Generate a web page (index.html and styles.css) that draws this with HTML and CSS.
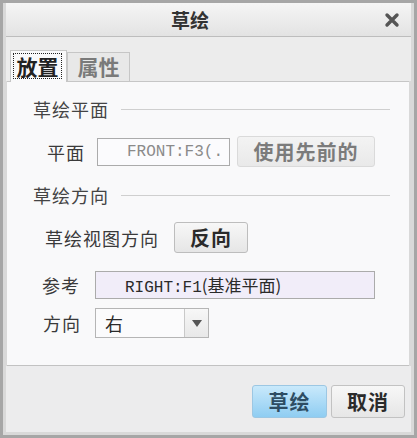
FILE: index.html
```html
<!DOCTYPE html>
<html lang="zh">
<head>
<meta charset="utf-8">
<title>草绘</title>
<link rel="stylesheet" href="styles.css">
</head>
<body>
<div class="win">
  <div class="titlebar">
    <span class="title">草绘</span>
    <span class="close">
      <svg width="16" height="16" viewBox="0 0 16 16"><path d="M3 3 L13 13 M13 3 L3 13" stroke="#555" stroke-width="3.4" stroke-linecap="round" fill="none"/></svg>
    </span>
  </div>
  <div class="tabs">
    <div class="tab active"><span class="focus">放置</span></div>
    <div class="tab">属性</div>
  </div>
  <div class="panel">
    <div class="sec s1"><span class="sec-t">草绘平面</span><i class="rule"></i></div>
    <div class="row r1">
      <span class="lbl l1">平面</span>
      <div class="field f-plane">FRONT:F3(.</div>
      <button class="btn btn-dis">使用先前的</button>
    </div>
    <div class="sec s2"><span class="sec-t">草绘方向</span><i class="rule"></i></div>
    <div class="row r2">
      <span class="lbl l2">草绘视图方向</span>
      <button class="btn btn-flip">反向</button>
    </div>
    <div class="row r3">
      <span class="lbl l3">参考</span>
      <div class="field f-ref">RIGHT:F1<span class="cjk">(基准平面)</span></div>
    </div>
    <div class="row r4">
      <span class="lbl l4">方向</span>
      <div class="select"><span class="val">右</span><span class="arrow"><svg width="10" height="7" viewBox="0 0 10 7"><path d="M0 0 H10 L5 7 Z" fill="#555"/></svg></span></div>
    </div>
  </div>
  <div class="footer">
    <button class="btn btn-foot primary">草绘</button>
    <button class="btn btn-foot">取消</button>
  </div>
</div>
</body>
</html>
```

FILE: styles.css
```css
html, body {
  margin: 0;
  padding: 0;
  background: #d4d4d4;
}
body {
  font-family: "Noto Sans CJK SC", "Noto Sans", sans-serif;
  color: #3a3a3a;
}
.win {
  width: 417px;
  height: 438px;
  box-sizing: border-box;
  border: 3px solid #a6a6a6;
  border-top-width: 3px;
  padding: 0 3px 3px 3px;
  background: #d9d9d9;
  display: flex;
  flex-direction: column;
}
.titlebar {
  height: 33px;
  flex: none;
  display: flex;
  align-items: center;
  background: linear-gradient(#f5f5f5, #e3e3e3);
  border-bottom: 1px solid #bdbdbd;
}
.title {
  flex: 1;
  text-align: center;
  font-size: 19px;
  font-weight: bold;
  color: #333;
  line-height: 33px;
}
.close {
  width: 35px;
  flex: none;
  display: flex;
  justify-content: center;
  align-items: center;
  padding-right: 2px;
}
.tabs {
  flex: none;
  background: #ececec;
  display: flex;
  align-items: flex-end;
  height: 44px;
  padding-left: 4px;
}
.tab {
  box-sizing: border-box;
  height: 29px;
  width: 63px;
  border: 1px solid #c6c6c6;
  border-bottom: none;
  background: #e8e8e8;
  color: #7a7a7a;
  font-size: 21px;
  font-weight: bold;
  line-height: 27px;
  text-align: center;
}
.tab.active {
  height: 32px;
  width: 57px;
  background: #f9f9fa;
  color: #222;
  position: relative;
  top: 1px;
  padding: 2px 2px 0 2px;
  text-align: left;
}
.focus {
  display: block;
  height: 26px;
  line-height: 24px;
  width: 49px;
  box-sizing: border-box;
  border: 1px dotted #222;
  text-align: center;
}
.panel {
  flex: none;
  height: 285px;
  box-sizing: border-box;
  margin: 0 2px 0 1px;
  background: #f9f9fa;
  border-top: 1px solid #c6c6c6;
  border-bottom: 1px solid #c2c2c2;
  padding: 15px 19px 0 26px;
  display: flex;
  flex-direction: column;
}
.sec {
  height: 24px;
  display: flex;
  align-items: center;
  gap: 12px;
}
.sec-t {
  font-size: 18px;
  color: #444;
  line-height: 24px;
  letter-spacing: 1px;
}
.rule {
  flex: 1;
  height: 1px;
  background: #cfcfcf;
}
.s2 { margin-top: 16px; }
.row {
  display: flex;
  align-items: center;
}
.r1 { margin-top: 15px; height: 31px; }
.r2 { margin-top: 15px; height: 31px; }
.r3 { margin-top: 18px; height: 28px; }
.r4 { margin-top: 9px; height: 30px; }
.lbl {
  font-size: 18px;
  color: #3a3a3a;
  letter-spacing: 1px;
}
.l1 { margin-left: 14px; width: 50px; }
.l2 { margin-left: 12px; width: 129px; }
.l3 { margin-left: 9px; width: 53px; }
.l4 { margin-left: 10px; width: 52px; }
.field {
  box-sizing: border-box;
  height: 28px;
  border: 1px solid #ababab;
  background: #fbfbfd;
  font-family: "Liberation Mono", "Noto Sans CJK SC", monospace;
  font-size: 16px;
  line-height: 26px;
  padding-left: 29px;
  white-space: nowrap;
  overflow: hidden;
}
.f-plane {
  width: 133px;
  color: #8a8a8a;
}
.f-ref {
  width: 280px;
  background: #f1edf9;
  color: #2a2a2a;
}
.f-ref .cjk {
  font-family: "Noto Sans CJK SC", sans-serif;
  font-size: 17px;
}
.btn {
  font-family: "Noto Sans CJK SC", "Noto Sans", sans-serif;
  box-sizing: border-box;
  border: 1px solid #c6c6c6;
  border-radius: 3px;
  background: linear-gradient(#f7f7f7, #e6e6e6);
  font-weight: bold;
  font-size: 20px;
  padding: 0;
  color: #2a2a2a;
}
.btn-dis {
  margin-left: 7px;
  width: 138px;
  height: 31px;
  color: #7b7b7b;
  border-color: #dadada;
  background: linear-gradient(#f3f3f3, #e9e9e9);
  letter-spacing: 1px;
}
.btn-flip {
  width: 74px;
  height: 31px;
  border-color: #bdbdbd;
  letter-spacing: 1px;
}
.select {
  box-sizing: border-box;
  width: 114px;
  height: 30px;
  border: 1px solid #b5b5b5;
  background: #fbfbfc;
  display: flex;
}
.val {
  flex: 1;
  font-size: 18px;
  line-height: 28px;
  padding-left: 9px;
  color: #2a2a2a;
}
.arrow {
  width: 23px;
  border-left: 1px solid #c9c9c9;
  background: linear-gradient(#f7f7f7, #e8e8e8);
  display: flex;
  align-items: center;
  justify-content: center;
}
.footer {
  flex: 1;
  background: #ececed;
  display: flex;
  justify-content: flex-end;
  align-items: flex-start;
  gap: 4px;
  padding: 19px 6px 0 0;
}
.btn-foot {
  height: 33px;
  width: 74px;
  letter-spacing: 1px;
  border-color: #c2c2c2;
}
.btn-foot.primary {
  width: 75px;
  background: linear-gradient(#c9e9fb, #8fcdf2);
  border-color: #9cc7e3;
  color: #2e4d63;
}
```
